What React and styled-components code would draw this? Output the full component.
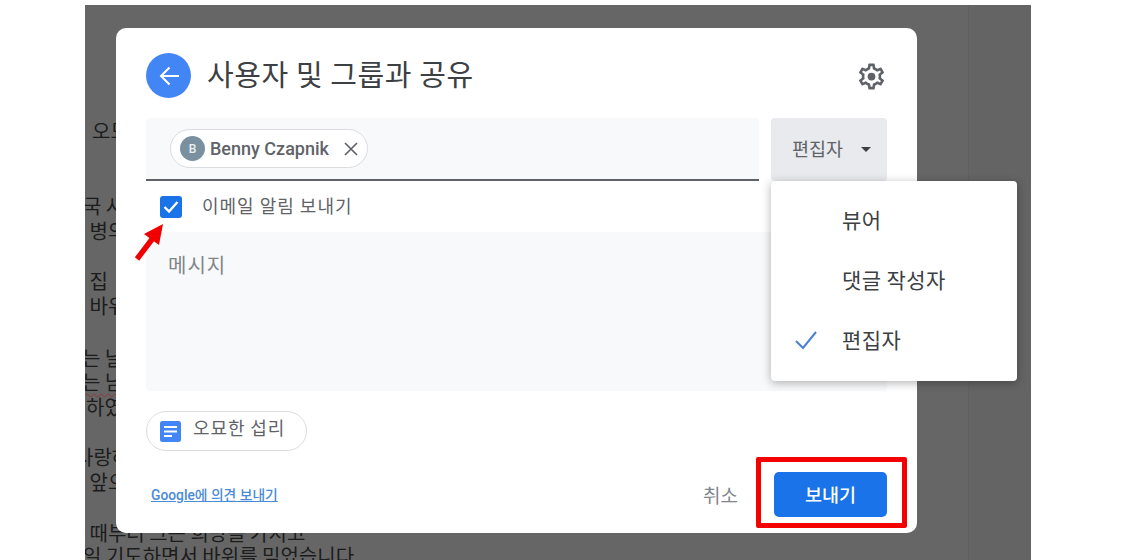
import React from "react";
import styled, { createGlobalStyle } from "styled-components";

const KR = `"Noto Sans CJK KR", sans-serif`;
const UI = `Roboto, "Noto Sans CJK KR", sans-serif`;

const Global = createGlobalStyle`
  html, body { margin: 0; padding: 0; background: #fff; overflow: hidden; }
  body { width: 1136px; height: 560px; font-family: ${UI}; }
`;

const Backdrop = styled.div`
  position: relative;
  width: 946px;
  height: 555px;
  margin: 5px 0 0 85px;
  background: #666;
  overflow: hidden;
  display: flex;
`;
const DocPage = styled.div`
  flex: 0 0 883px;
  padding-top: 114px;
  box-sizing: border-box;
`;
const SidePanel = styled.div`
  flex: 1;
  background: #646464;
  border-left: 1px solid #606060;
`;
const DocRow = styled.div`
  height: ${p => p.$h || 25}px;
`;
const DocLine = styled.div`
  height: ${p => p.$lh || 24}px;
  line-height: ${p => p.$lh || 24}px;
  font-family: ${KR};
  font-size: 20px;
  color: #1c1c1c;
  white-space: pre;
  margin-left: ${p => p.$x || 0}px;
  ${p => p.$under && "text-decoration: underline wavy #8a3a3a 1px; text-underline-offset: 3px;"}
`;

const Dialog = styled.div`
  position: absolute;
  left: 31px;
  top: 23px;
  width: 801px;
  height: 505px;
  box-sizing: border-box;
  padding: 25px 30px 16px;
  background: #fff;
  border-radius: 10px;
  display: flex;
  flex-direction: column;
`;
const Header = styled.div`
  display: flex;
  align-items: center;
  height: 45px;
`;
const BackButton = styled.div`
  width: 45px;
  height: 45px;
  border-radius: 50%;
  background: #4285f4;
  display: flex;
  align-items: center;
  justify-content: center;
`;
const Title = styled.h1`
  margin: 0 0 0 16px;
  flex: 1;
  font-family: ${KR};
  font-weight: 400;
  font-size: 29px;
  letter-spacing: 0.6px;
  color: #3c4043;
  position: relative;
  top: -3px;
`;
const GearBox = styled.div`
  display: flex;
  margin: 2px 0 0 0;
`;
const RecipientRow = styled.div`
  display: flex;
  gap: 12px;
  margin-top: 20px;
  height: 63px;
`;
const RecipientField = styled.div`
  flex: 1;
  box-sizing: border-box;
  background: #f8f9fa;
  border-bottom: 2px solid #5f6368;
  border-radius: 4px 4px 0 0;
  padding: 11px 0 0 24px;
`;
const Chip = styled.div`
  display: inline-flex;
  align-items: center;
  box-sizing: border-box;
  height: 39px;
  width: 198px;
  padding-left: 9px;
  border: 1px solid #dadce0;
  border-radius: 20px;
  background: #fff;
`;
const Avatar = styled.div`
  width: 25px;
  height: 25px;
  border-radius: 50%;
  background: #7b909f;
  color: #e8eef2;
  font-size: 12px;
  font-weight: 500;
  display: flex;
  align-items: center;
  justify-content: center;
`;
const ChipName = styled.span`
  margin-left: 5px;
  font-size: 18px;
  font-weight: 500;
  color: #5f6368;
  white-space: nowrap;
`;
const ChipClose = styled.span`
  display: flex;
  margin-left: 14px;
`;
const RoleButton = styled.div`
  width: 116px;
  box-sizing: border-box;
  background: #e8eaed;
  border-radius: 4px;
  display: flex;
  align-items: center;
  padding: 0 16px 3px 21px;
  justify-content: space-between;
  font-family: ${KR};
  font-size: 18.5px;
  color: #5f6368;
`;
const Caret = styled.span`
  width: 0;
  height: 0;
  margin-top: 3px;
  border-left: 5px solid transparent;
  border-right: 5px solid transparent;
  border-top: 5px solid #3c4043;
`;
const NotifyRow = styled.div`
  display: flex;
  height: 51px;
  padding: 15px 0 0 14px;
  box-sizing: border-box;
`;
const Checkbox = styled.div`
  width: 22px;
  height: 22px;
  background: #1a73e8;
  border-radius: 3px;
  display: flex;
  align-items: center;
  justify-content: center;
`;
const NotifyLabel = styled.span`
  margin-left: 20px;
  font-family: ${KR};
  font-size: 18px;
  letter-spacing: 1px;
  line-height: 18px;
  color: #5f6368;
`;
const MessageBox = styled.div`
  height: 159px;
  box-sizing: border-box;
  background: #f8f9fa;
  border-radius: 0 0 4px 4px;
  padding: 19px 22px;
  font-family: ${KR};
  font-size: 20px;
  letter-spacing: 1px;
  line-height: 28px;
  color: #80868b;
`;
const Attachment = styled.div`
  display: inline-flex;
  align-items: center;
  align-self: flex-start;
  box-sizing: border-box;
  height: 40px;
  width: 161px;
  margin-top: 20px;
  padding-left: 13px;
  border: 1px solid #dadce0;
  border-radius: 20px;
  font-family: ${KR};
  font-size: 18px;
  letter-spacing: 0.9px;
  color: #5f6368;
`;
const AttachmentName = styled.span`
  margin-left: 12px;
  position: relative;
  top: -4px;
`;
const Footer = styled.div`
  margin-top: auto;
  display: flex;
  align-items: center;
  height: 45px;
`;
const FeedbackLink = styled.a`
  margin-left: 5px;
  flex: 1;
  font-family: ${UI};
  font-size: 13.8px;
  font-weight: 500;
  color: #4a8bd6;
  text-decoration: underline;
  padding-bottom: 1px;
`;
const CancelButton = styled.span`
  font-family: ${KR};
  font-size: 19px;
  color: #80868b;
  margin-right: 36px;
`;
const SendButton = styled.div`
  width: 113px;
  height: 45px;
  border-radius: 5px;
  background: #1a73e8;
  color: #fff;
  font-family: ${KR};
  font-size: 18.5px;
  font-weight: 500;
  padding-bottom: 2px;
  box-sizing: border-box;
  display: flex;
  align-items: center;
  justify-content: center;
`;
const RoleMenu = styled.ul`
  position: absolute;
  left: 655px;
  top: 153px;
  width: 246px;
  height: 200px;
  box-sizing: border-box;
  margin: 0;
  padding: 8px 0 0;
  list-style: none;
  background: #fff;
  border-radius: 4px;
  box-shadow: 0 2px 10px rgba(0, 0, 0, 0.3);
`;
const RoleItem = styled.li`
  position: relative;
  height: 60px;
  line-height: 60px;
  padding-left: 71px;
  font-family: ${KR};
  font-size: 21px;
  letter-spacing: 0.4px;
  color: #3c4043;
`;
const RoleCheck = styled.svg`
  position: absolute;
  left: 23px;
  top: 21px;
`;
const Annotation = styled.div`
  position: absolute;
  left: 640px;
  top: 429px;
  width: 151px;
  height: 71px;
  box-sizing: border-box;
  border: 5px solid #f40000;
  border-radius: 2px;
`;
const ArrowMark = styled.svg`
  position: absolute;
  left: 17px;
  top: 193px;
`;

const docLines = [
  { t: "오묘", h: 75, x: 7 },
  { t: "국 사", x: -2 },
  { t: " 병의", h: 50 },
  { t: " 집" },
  { t: " 바위", h: 52 },
  { t: "는 날", h: 24, x: -3 },
  { t: "는 남", under: true, x: -3 },
  { t: "하였", h: 50, x: 1 },
  { t: "사랑하", x: -10 },
  { t: " 앞으", h: 51 },
  { t: " 때부터 그는 희망을 가지고", h: 23, lh: 23 },
  { t: "일 기도하면서 바위를 믿었습니다", h: 23, lh: 23, x: -2 },
];

const gearPath =
  "M19.43 12.98c.04-.32.07-.64.07-.98 0-.34-.03-.66-.07-.98l2.11-1.65c.19-.15.24-.42.12-.64l-2-3.46c-.09-.16-.26-.25-.44-.25-.06 0-.12.01-.17.03l-2.49 1c-.52-.4-1.08-.73-1.69-.98l-.38-2.65C14.46 2.18 14.25 2 14 2h-4c-.25 0-.46.18-.49.42l-.38 2.65c-.61.25-1.17.59-1.69.98l-2.49-1c-.06-.02-.12-.03-.18-.03-.17 0-.34.09-.43.25l-2 3.46c-.13.22-.07.49.12.64l2.11 1.65c-.04.32-.07.65-.07.98 0 .33.03.66.07.98l-2.11 1.65c-.19.15-.24.42-.12.64l2 3.46c.09.16.26.25.44.25.06 0 .12-.01.17-.03l2.49-1c.52.4 1.08.73 1.69.98l.38 2.65c.03.24.24.42.49.42h4c.25 0 .46-.18.49-.42l.38-2.65c.61-.25 1.17-.59 1.69-.98l2.49 1c.06.02.12.03.18.03.17 0 .34-.09.43-.25l2-3.46c.12-.22.07-.49-.12-.64l-2.11-1.65zm-1.98-1.71c.04.31.05.52.05.73 0 .21-.02.43-.05.73l-.14 1.13.89.7 1.08.84-.7 1.21-1.27-.51-1.04-.42-.9.68c-.43.32-.84.56-1.25.73l-1.06.43-.16 1.13-.2 1.35h-1.4l-.19-1.35-.16-1.13-1.06-.43c-.43-.18-.83-.41-1.23-.71l-.91-.7-1.06.43-1.27.51-.7-1.21 1.08-.84.89-.7-.14-1.13c-.03-.31-.05-.54-.05-.74s.02-.43.05-.73l.14-1.13-.89-.7-1.08-.84.7-1.21 1.27.51 1.04.42.9-.68c.43-.32.84-.56 1.25-.73l1.06-.43.16-1.13.2-1.35h1.39l.19 1.35.16 1.13 1.06.43c.43.18.83.41 1.23.71l.91.7 1.06-.43 1.27-.51.7 1.21-1.07.85-.89.7.14 1.13z";

export default function App() {
  return (
    <>
      <Global />
      <Backdrop>
        <DocPage>
          {docLines.map((l, i) => (
            <DocRow key={i} $h={l.h}>
              <DocLine $lh={l.lh} $x={l.x} $under={l.under}>{l.t}</DocLine>
            </DocRow>
          ))}
        </DocPage>
        <SidePanel />
        <Dialog>
          <Header>
            <BackButton>
              <svg width="24" height="24" viewBox="0 0 24 24" fill="none" stroke="#fff" strokeWidth="2">
                <path d="M22 12H4M12.5 3.5 4 12l8.5 8.5" />
              </svg>
            </BackButton>
            <Title>사용자 및 그룹과 공유</Title>
            <GearBox>
              <svg width="31" height="31" viewBox="0 0 24 24" fill="#5f6368">
                <path d={gearPath} />
                <circle cx="12" cy="12" r="3" />
              </svg>
            </GearBox>
          </Header>
          <RecipientRow>
            <RecipientField>
              <Chip>
                <Avatar>B</Avatar>
                <ChipName>Benny Czapnik</ChipName>
                <ChipClose>
                  <svg width="16" height="16" viewBox="0 0 16 16" stroke="#5f6368" strokeWidth="1.7">
                    <path d="M2 2l12 12M14 2 2 14" />
                  </svg>
                </ChipClose>
              </Chip>
            </RecipientField>
            <RoleButton>
              편집자
              <Caret />
            </RoleButton>
          </RecipientRow>
          <NotifyRow>
            <Checkbox>
              <svg width="16" height="14" viewBox="0 0 16 14" fill="none" stroke="#fff" strokeWidth="2.4">
                <path d="M1.5 7l4.5 4.5L14.5 2" />
              </svg>
            </Checkbox>
            <NotifyLabel>이메일 알림 보내기</NotifyLabel>
          </NotifyRow>
          <MessageBox>메시지</MessageBox>
          <Attachment>
            <svg width="21" height="21" viewBox="0 0 21 21">
              <rect width="21" height="21" rx="2.5" fill="#4285f4" />
              <path d="M4 6h13M4 10.5h13M4 15h8" stroke="#fff" strokeWidth="2" />
            </svg>
            <AttachmentName>오묘한 섭리</AttachmentName>
          </Attachment>
          <Footer>
            <FeedbackLink>Google에 의견 보내기</FeedbackLink>
            <CancelButton>취소</CancelButton>
            <SendButton>보내기</SendButton>
          </Footer>
          <RoleMenu>
            <RoleItem>뷰어</RoleItem>
            <RoleItem>댓글 작성자</RoleItem>
            <RoleItem>
              <RoleCheck width="24" height="20" viewBox="0 0 24 20" fill="none" stroke="#4a7fd4" strokeWidth="2">
                <path d="M2 11l7 7L22 2" />
              </RoleCheck>
              편집자
            </RoleItem>
          </RoleMenu>
          <Annotation />
          <ArrowMark width="32" height="40" viewBox="0 0 32 40">
            <path d="M4 38 L20 17" stroke="#f00000" strokeWidth="5.5" />
            <path d="M30 3 L11 13 L26 24 Z" fill="#f00000" />
          </ArrowMark>
        </Dialog>
      </Backdrop>
    </>
  );
}
